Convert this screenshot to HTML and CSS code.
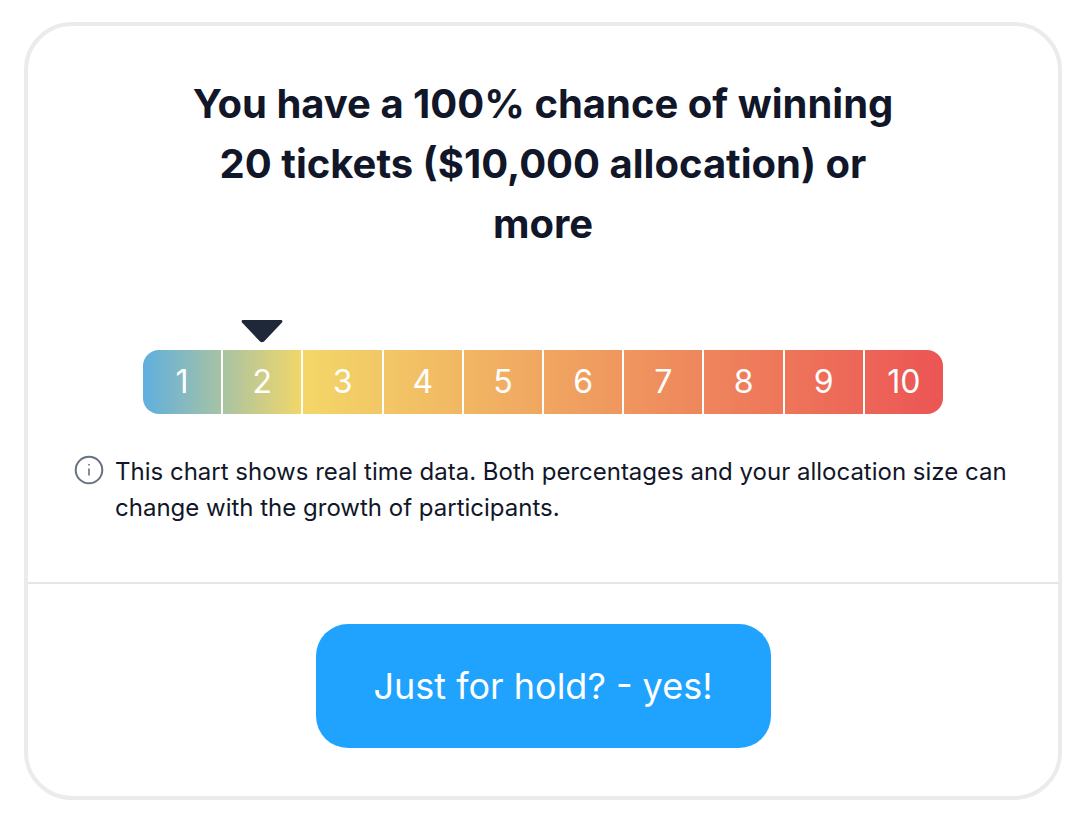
FILE: index.html
```
<!DOCTYPE html>
<html lang="en">
  <head>
    <meta charset="UTF-8" />
    <meta name="viewport" content="width=device-width, initial-scale=1.0" />
    <title>Your allocation chance</title>
    <link rel="stylesheet" href="styles.css">
  </head>
  <body>
    <main class="card">
      <section class="chance">
        <h2 class="title">You have a 100% chance of winning 20 tickets ($10,000 allocation) or more</h2>
        <div class="chart">
          <div class="pointer-row">
            <svg class="pointer" viewBox="0 0 42 24" aria-hidden="true">
              <path d="M1.5 0h39q1.5 .5.5 2.500L23 21.500q-2 1.500-4 0L1 2.500q-1-2 .5-2.500z" />
            </svg>
          </div>
          <ol class="scale">
            <li>1</li>
            <li>2</li>
            <li>3</li>
            <li>4</li>
            <li>5</li>
            <li>6</li>
            <li>7</li>
            <li>8</li>
            <li>9</li>
            <li>10</li>
          </ol>
        </div>
        <div class="note">
          <svg class="info-icon" viewBox="0 0 30 30" aria-hidden="true">
            <circle cx="15" cy="15" r="13.3" />
            <path class="info-mark" d="M15 13.500v7M15 9v1.600" />
          </svg>
          <p>This chart shows real time data. Both percentages and your allocation size can change with the growth of participants.</p>
        </div>
      </section>
      <div class="actions">
        <button type="button" class="hold-button">Just for hold? - yes!</button>
      </div>
    </main>
  </body>
</html>
```
FILE: styles.css
```
* {
  box-sizing: border-box;
}
body {
  margin: 0;
  padding: 22px 22px 22px 24px;
  font-family: 'Inter', sans-serif;
  color: #111729;
  background: #fff;
}
.card {
  border: 4px solid #ebebed;
  border-radius: 48px;
}
.chance {
  padding: 48px 46px 56px;
  border-bottom: 2px solid #e5e5e6;
}
.title {
  max-width: 720px;
  margin: 0 auto;
  font-size: 40px;
  line-height: 60px;
  font-weight: 700;
  text-align: center;
}
.chart {
  max-width: 800px;
  margin: 66px auto 0;
}
/* one column per ticket, the pointer sits over the current one */
.pointer-row {
  display: grid;
  grid-template-columns: repeat(10, 1fr);
  column-gap: 2px;
  height: 30px;
}
.pointer {
  grid-column: 2;
  justify-self: center;
  width: 42px;
  height: 24px;
  fill: #1f2839;
}
.scale {
  display: flex;
  margin: 0;
  padding: 0;
  list-style: none;
  border-radius: 16px;
  background: linear-gradient(to right, #5fafde, #f3d768 20%, #ec5555);
  overflow: hidden;
}
.scale li {
  flex: 1 1 0;
  color: #fff;
  font-size: 32px;
  line-height: 64px;
  text-align: center;
  border-right: 2px solid #fff;
}
.scale li:last-child {
  border-right: 0;
}
.note {
  display: flex;
  gap: 11px;
  margin-top: 40px;
}
.note p {
  margin: 0;
  font-size: 24px;
  line-height: 36px;
}
.info-icon {
  flex: none;
  width: 30px;
  height: 30px;
  margin-top: 1px;
  fill: none;
  stroke: #687083;
  stroke-width: 2;
}
.info-mark {
  stroke-width: 1.6;
}
.actions {
  padding: 40px 46px 48px;
  text-align: center;
}
.hold-button {
  padding: 32px 58px;
  border: 0;
  border-radius: 32px;
  background: #20a3ff;
  color: #fff;
  font-family: inherit;
  font-size: 36px;
  line-height: 60px;
  cursor: pointer;
}
```
